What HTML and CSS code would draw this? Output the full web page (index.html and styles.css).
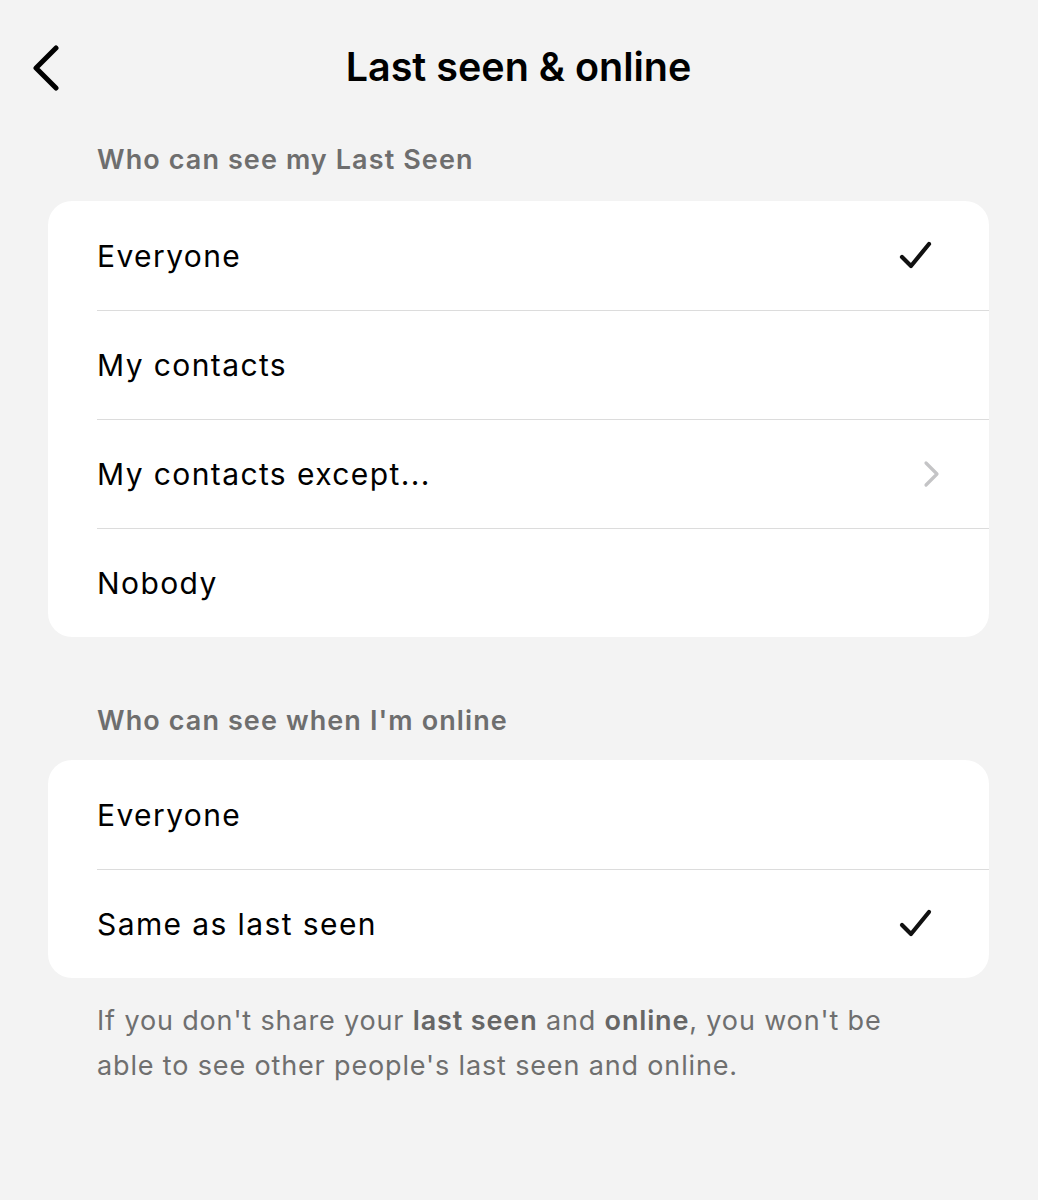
FILE: index.html
```html
<!DOCTYPE html>
<html lang="en">
<head>
<meta charset="utf-8">
<title>Last seen &amp; online</title>
<link rel="stylesheet" href="styles.css">
</head>
<body>
<div class="screen">
  <header class="nav">
    <svg class="back" width="30" height="46" viewBox="0 0 30 46"><path d="M25 3 L5 23 L25 43" fill="none" stroke="#000" stroke-width="5" stroke-linecap="round" stroke-linejoin="round"/></svg>
    <h1 class="title">Last seen &amp; online</h1>
  </header>

  <h2 class="section-head">Who can see my Last Seen</h2>
  <ul class="card">
    <li class="row"><span class="label">Everyone</span><svg class="check" width="34" height="30" viewBox="0 0 34 30"><path d="M3 16 L12 25 L30 3" fill="none" stroke="#111" stroke-width="4.2" stroke-linecap="round" stroke-linejoin="round"/></svg></li>
    <li class="row"><span class="label">My contacts</span></li>
    <li class="row"><span class="label">My contacts except...</span><svg class="chev" width="20" height="28" viewBox="0 0 20 28"><path d="M4 3 L15 14 L4 25" fill="none" stroke="#c4c4c6" stroke-width="3.2" stroke-linecap="round" stroke-linejoin="round"/></svg></li>
    <li class="row"><span class="label">Nobody</span></li>
  </ul>

  <h2 class="section-head second">Who can see when I'm online</h2>
  <ul class="card">
    <li class="row"><span class="label">Everyone</span></li>
    <li class="row"><span class="label">Same as last seen</span><svg class="check" width="34" height="30" viewBox="0 0 34 30"><path d="M3 16 L12 25 L30 3" fill="none" stroke="#111" stroke-width="4.2" stroke-linecap="round" stroke-linejoin="round"/></svg></li>
  </ul>

  <p class="footnote">If you don't share your <b>last seen</b> and <b>online</b>, you won't be able to see other people's last seen and online.</p>
</div>
</body>
</html>
```

FILE: styles.css
```css
html, body {
  margin: 0;
  padding: 0;
  background: #f3f3f3;
}
body {
  font-family: Inter, "Noto Sans", "Liberation Sans", sans-serif;
  color: #000;
  width: 1038px;
  height: 1200px;
  overflow: hidden;
}
.screen {
  padding: 0 49px 0 48px;
}
.nav {
  position: relative;
  height: 136px;
  display: flex;
  align-items: center;
  justify-content: center;
}
.back {
  position: absolute;
  left: -17px;
  top: 45px;
}
.title {
  margin: 0;
  font-size: 39.5px;
  font-weight: 600;
  letter-spacing: 0;
  line-height: 1;
}
.section-head {
  margin: 0;
  padding-left: 49px;
  font-size: 27px;
  font-weight: 600;
  letter-spacing: 1.1px;
  color: #6e6e6e;
  line-height: 48px;
  height: 48px;
  margin-bottom: 17px;
}
.section-head.second {
  margin-top: 60px;
  margin-bottom: 15px;
}
.card {
  list-style: none;
  margin: 0;
  padding: 0;
  background: #fff;
  border-radius: 24px;
  overflow: hidden;
}
.row {
  height: 109px;
  margin-left: 49px;
  padding-right: 47px;
  display: flex;
  align-items: center;
  justify-content: space-between;
  border-top: 1px solid #dcdcdc;
  box-sizing: border-box;
}
.row:first-child {
  border-top: none;
}
.label {
  font-size: 30px;
  font-weight: 400;
  letter-spacing: 1.4px;
}
.check {
  margin-right: 9px;
}
.footnote {
  margin: 20px 0 0 49px;
  width: 820px;
  font-size: 27px;
  letter-spacing: 0.85px;
  line-height: 45px;
  color: #6f6f6f;
}
.footnote b {
  font-weight: 600;
  color: #666;
}
```
